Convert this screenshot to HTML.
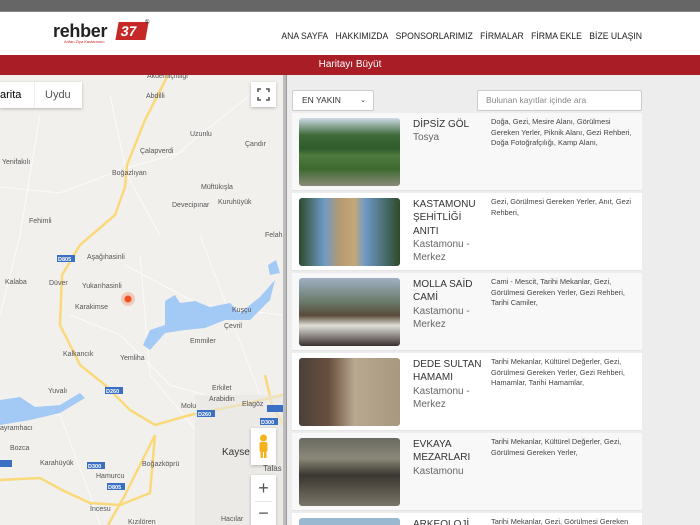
<!DOCTYPE html>
<html><head><meta charset="utf-8"><style>
*{margin:0;padding:0;box-sizing:border-box}
html,body{width:700px;height:525px;overflow:hidden}
body{font-family:"Liberation Sans",sans-serif;background:#fff;position:relative}
.top{position:absolute;left:0;top:0;width:700px;height:12px;background:#666;border-bottom:1px solid #888}
.hdr{position:absolute;left:0;top:12px;width:700px;height:43px;background:#fff}
.nav{position:absolute;top:18px;right:58px;font-size:9.4px;color:#222;white-space:nowrap;transform:scaleX(0.92);transform-origin:right center}
.nav span{margin-left:8px}
.red{position:absolute;left:0;top:55px;width:700px;height:20px;background:#a91d26;color:#fff;font-size:10px;text-align:center;line-height:20px}
.map{position:absolute;left:0;top:75px;width:283px;height:450px;background:#f2f0ed;overflow:hidden}
.div{position:absolute;left:283px;top:75px;width:4px;height:450px;background:#bdbdbd;border-right:1px solid #999}
.right{position:absolute;left:287px;top:75px;width:413px;height:450px;background:#ededed;overflow:hidden}
.ctl{position:absolute;background:#fff;box-shadow:0 1px 3px rgba(0,0,0,.25)}
.row{position:absolute;left:5px;width:350px;height:78px;background:#f8f8f8;border-bottom:1px solid #e4e4e4}
.row.w{background:#fff}
.im{position:absolute;left:7px;top:5px;width:101px;height:68px;border-radius:3px}
.t{position:absolute;left:121px;top:5px;width:72px;font-size:10px;line-height:13.3px;color:#333}
.t i{font-style:normal;color:#666}
.d{position:absolute;left:199px;top:4px;width:148px;font-size:7.4px;line-height:10.7px;color:#444}
</style></head><body>
<div class="top"></div>
<div class="hdr">
 <div style="position:absolute;left:53px;top:9px;font-size:18px;font-weight:bold;color:#222;letter-spacing:-.3px">rehber</div>
 <div style="position:absolute;left:117px;top:10px;width:30px;height:18px;background:#c62828;transform:skewX(-10deg)"><span style="color:#fff;font-weight:bold;font-size:14px;margin-left:4px;line-height:18px">37</span></div>
 <div style="position:absolute;left:145px;top:8px;font-size:6px;color:#333">®</div>
 <div style="position:absolute;left:64px;top:27px;font-size:4px;color:#c62828">Arifan Ziya Kastamonu</div>
 <div class="nav"><span>ANA SAYFA</span><span>HAKKIMIZDA</span><span>SPONSORLARIMIZ</span><span>FİRMALAR</span><span>FİRMA EKLE</span><span>BİZE ULAŞIN</span></div>
</div>
<div class="red">Haritayı Büyüt</div>
<div class="map">
<svg width="283" height="450" style="position:absolute;left:0;top:0" font-family="Liberation Sans" font-size="7" fill="#555">
<g fill="none" stroke="#fbfbfa" stroke-width="1">
<path d="M0 112 L60 118 L120 95 L185 76"/><path d="M125 190 L200 230 L283 240"/><path d="M110 20 L127 100 L160 160"/><path d="M40 40 L20 160 L0 240"/><path d="M70 240 L120 260 L170 310 L240 330 L283 320"/><path d="M0 330 L60 340 L90 420 L100 450"/><path d="M200 160 L230 240 L260 320 L283 340"/><path d="M140 180 L150 300 L200 360"/><path d="M170 85 L200 60 L250 20"/></g>
<g fill="none" stroke="#f9d97a" stroke-width="2.5">
<path d="M168 0 L145 45 L127 90 L125 112 L115 140 L80 170 L62 200 L60 250 L80 290 L105 310 L130 335 L155 350 L190 340 L240 330 L283 320"/>
<path d="M0 405 L40 403 L62 415 L90 428 L120 430 L150 418 L155 360"/><path d="M155 360 L125 420 L108 450"/>
<path d="M265 300 L272 330 L283 350"/></g>
<path fill="#a3c9f5" d="M165 226 L175 220 L180 228 L195 226 L210 232 L230 228 L240 238 L260 222 L275 205 L270 225 L250 245 L225 245 L205 253 L185 255 L165 258 L150 275 L143 270 L150 255 L165 250 Z"/>
<path fill="#a3c9f5" d="M0 325 L20 322 L35 332 L60 330 L80 318 L85 323 L60 338 L30 345 L0 350 Z"/>
<path fill="#a3c9f5" d="M268 190 L276 185 L280 198 L270 200 Z"/>
<circle cx="128" cy="224" r="7" fill="#f2b8a8" opacity=".7"/><circle cx="128" cy="224" r="3.5" fill="#f0501e"/>
<rect x="195" y="320" width="88" height="130" fill="#e8e6e3" opacity=".6"/>
<text x="147" y="3">Akdemiçiftliği</text><text x="146" y="23">Abdilli</text><text x="190" y="61">Uzunlu</text><text x="245" y="71">Çandır</text><text x="140" y="78">Çalapverdi</text><text x="2" y="89">Yenifakılı</text><text x="112" y="100">Boğazlıyan</text><text x="201" y="114">Müftükışla</text><text x="172" y="132">Devecipınar</text><text x="218" y="129">Kuruhüyük</text><text x="265" y="162">Felah</text><text x="29" y="148">Fehimli</text><text x="87" y="184">Aşağıhasinli</text><text x="82" y="213">Yukarıhasinli</text><text x="5" y="209">Kalaba</text><text x="49" y="210">Düver</text><text x="232" y="237">Kuşçu</text><text x="224" y="253">Çevril</text><text x="75" y="234">Karakimse</text><text x="190" y="268">Emmiler</text><text x="63" y="281">Kalkancık</text><text x="120" y="285">Yemliha</text><text x="48" y="318">Yuvalı</text><text x="212" y="315">Erkilet</text><text x="209" y="326">Arabidin</text><text x="181" y="333">Molu</text><text x="242" y="331">Elagöz</text><text x="0" y="355">ayramhacı</text><text x="10" y="375">Bozca</text><text x="142" y="391">Boğazköprü</text><text x="40" y="390">Karahüyük</text><text x="96" y="403">Hamurcu</text><text x="222" y="380" font-size="10" fill="#333">Kayse</text><text x="263" y="396" font-size="8">Talas</text><text x="221" y="446">Hacılar</text><text x="196" y="458">Beğendik</text><text x="90" y="436">İncesu</text><text x="128" y="449">Kızılören</text>
<g font-size="5.5" fill="#fff" font-weight="bold"><rect x="57" y="180" width="18" height="7" fill="#3a6fc4"/><text x="58" y="186">D805</text><rect x="105" y="312" width="18" height="7" fill="#3a6fc4"/><text x="106" y="318">D260</text><rect x="197" y="335" width="18" height="7" fill="#3a6fc4"/><text x="198" y="341">D260</text><rect x="260" y="343" width="18" height="7" fill="#3a6fc4"/><text x="261" y="349">D300</text><rect x="87" y="462" width="18" height="7" fill="#3a6fc4"/><text x="88" y="468">D300</text><rect x="107" y="408" width="18" height="7" fill="#3a6fc4"/><text x="108" y="414">D805</text><rect x="267" y="330" width="16" height="7" fill="#3a6fc4"/><rect x="0" y="385" width="12" height="7" fill="#3a6fc4"/><rect x="87" y="387" width="18" height="7" fill="#3a6fc4"/><text x="88" y="393">D300</text></g>
</svg>
<div class="ctl" style="left:0;top:7px;width:82px;height:26px;font-size:11px;line-height:26px"><span style="position:absolute;left:0;color:#000">arita</span><span style="position:absolute;left:34px;top:0;width:1px;height:26px;background:#eee"></span><span style="position:absolute;left:45px;color:#555">Uydu</span></div>
<div class="ctl" style="left:251px;top:7px;width:25px;height:25px"><svg width="25" height="25"><path d="M7 10V7h3M15 7h3v3M18 15v3h-3M10 18H7v-3" fill="none" stroke="#555" stroke-width="1.6"/></svg></div>
<div class="ctl" style="left:251px;top:353px;width:25px;height:37px"><svg width="25" height="37"><circle cx="12.5" cy="10" r="3.5" fill="#f6b21c"/><rect x="8.5" y="14" width="8" height="10" rx="2" fill="#f6b21c"/><rect x="9.5" y="23" width="2.5" height="7" fill="#f6b21c"/><rect x="13" y="23" width="2.5" height="7" fill="#f6b21c"/></svg></div>
<div class="ctl" style="left:251px;top:400px;width:25px;height:52px;text-align:center;color:#555"><div style="font-size:18px;line-height:26px">+</div><div style="position:absolute;left:4px;top:26px;width:17px;height:1px;background:#e6e6e6"></div><div style="font-size:18px;line-height:24px">−</div></div>
</div>
<div class="div"></div>
<div class="right">
 <div style="position:absolute;left:5px;top:15px;width:82px;height:21px;background:#fff;border:1px solid #ccc;border-radius:2px;font-size:8.5px;line-height:19px;padding-left:9px;color:#333">EN YAKIN<span style="position:absolute;right:7px;font-size:7px">⌄</span></div>
 <div style="position:absolute;left:190px;top:15px;width:165px;height:21px;background:#fff;border:1px solid #ccc;border-radius:2px;font-size:8.5px;line-height:19px;padding-left:8px;color:#888">Bulunan kayıtlar içinde ara</div>
<div class="row" style="top:38px"><div class="im" style="background:linear-gradient(#cfdbe6 0,#3f6a3a 25%,#2f5a2a 45%,#4f7a3f 55%,#3d6a30 75%,#8a8a78 100%)"></div><div class="t">DİPSİZ GÖL<br><i>Tosya</i></div><div class="d">Doğa, Gezi, Mesire Alanı, Görülmesi Gereken Yerler, Piknik Alanı, Gezi Rehberi, Doğa Fotoğrafçılığı, Kamp Alanı,</div></div>
<div class="row w" style="top:118px"><div class="im" style="background:linear-gradient(90deg,#2d4a2a 0,#6f9ac7 25%,#b59a70 40%,#c4a878 55%,#6f9ac7 65%,#2d4a2a 100%)"></div><div class="t">KASTAMONU ŞEHİTLİĞİ ANITI<br><i>Kastamonu - Merkez</i></div><div class="d">Gezi, Görülmesi Gereken Yerler, Anıt, Gezi Rehberi,</div></div>
<div class="row" style="top:198px"><div class="im" style="background:linear-gradient(#9fb0c4 0,#6a7a6a 35%,#5a4a3a 55%,#e0e0d8 70%,#3a3030 100%)"></div><div class="t">MOLLA SAİD CAMİ<br><i>Kastamonu - Merkez</i></div><div class="d">Cami - Mescit, Tarihi Mekanlar, Gezi, Görülmesi Gereken Yerler, Gezi Rehberi, Tarihi Camiler,</div></div>
<div class="row w" style="top:278px"><div class="im" style="background:linear-gradient(90deg,#4a4038 0,#6a5040 30%,#b8a890 55%,#a89880 100%)"></div><div class="t">DEDE SULTAN HAMAMI<br><i>Kastamonu - Merkez</i></div><div class="d">Tarihi Mekanlar, Kültürel Değerler, Gezi, Görülmesi Gereken Yerler, Gezi Rehberi, Hamamlar, Tarihi Hamamlar,</div></div>
<div class="row" style="top:358px"><div class="im" style="background:linear-gradient(#6a6a60 0,#8a8878 30%,#3a3630 55%,#7a7668 100%)"></div><div class="t">EVKAYA MEZARLARI<br><i>Kastamonu</i></div><div class="d">Tarihi Mekanlar, Kültürel Değerler, Gezi, Görülmesi Gereken Yerler,</div></div>
<div class="row w" style="top:438px"><div class="im" style="background:#9ab8d0"></div><div class="t">ARKEOLOJİ</div><div class="d">Tarihi Mekanlar, Gezi, Görülmesi Gereken</div></div>
</div>
</body></html>
